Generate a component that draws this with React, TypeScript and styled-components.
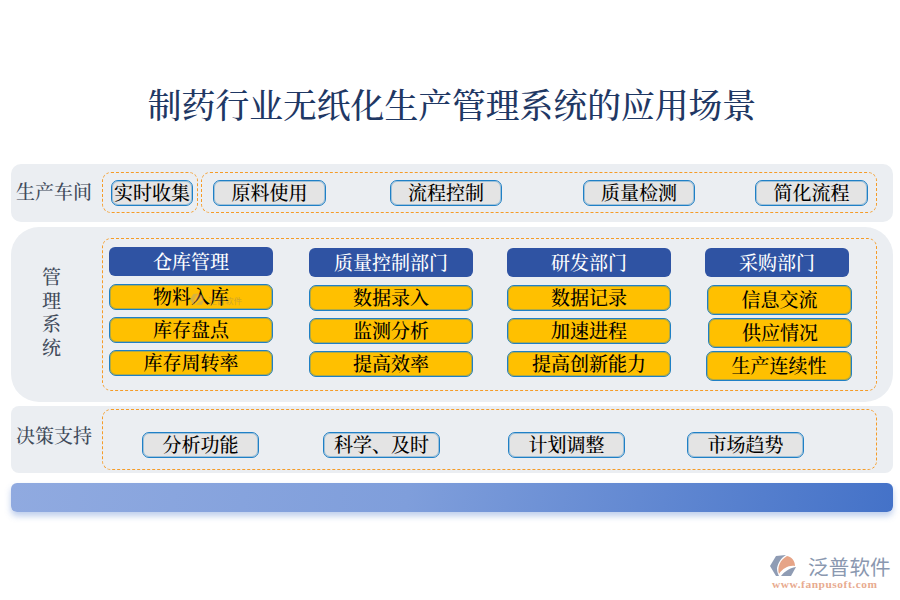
import React from 'react';
import styled, { createGlobalStyle } from 'styled-components';

const serif = `"Liberation Serif", "Noto Serif CJK SC", "Noto Sans CJK SC", serif`;

const GlobalStyle = createGlobalStyle`
    html, body {
        margin: 0;
        padding: 0;
        background: #fff;
        font-family: ${serif};
    }
`;

const Page = styled.div`
    position: relative;
    width: 900px;
    height: 600px;
    overflow: hidden;
    padding: 0 7px 0 11px;
    box-sizing: border-box;
`;

const Title = styled.h1`
    margin: 0;
    height: 164px;
    padding-top: 86px;
    box-sizing: border-box;
    text-align: center;
    font-size: 33.8px;
    line-height: 42px;
    font-weight: 500;
    color: #1f3864;
`;

const Panel = styled.section<{ $height: number; $radius: number; $gap: number }>`
    display: flex;
    height: ${p => p.$height}px;
    margin-bottom: ${p => p.$gap}px;
    border-radius: ${p => p.$radius}px;
    background: #ebeef2;
`;

const RowLabel = styled.div<{ $lift?: number }>`
    width: 91px;
    padding-left: 5px;
    padding-bottom: ${p => p.$lift ?? 0}px;
    box-sizing: border-box;
    align-self: center;
    font-size: 19px;
    line-height: 24px;
    font-weight: 500;
    color: #3f4a5a;
`;

const StackLabel = styled.div`
    width: 91px;
    padding-left: 31px;
    box-sizing: border-box;
    align-self: center;
    font-size: 19px;
    line-height: 23.5px;
    font-weight: 500;
    color: #3f4a5a;
    margin-top: -3px;
`;

const Dashed = styled.div`
    border: 1px dashed #f59c28;
    border-radius: 9px;
    box-sizing: border-box;
`;

const TopCollect = styled(Dashed)`
    width: 96px;
    height: 41px;
    margin: 8px 3px 0 0;
    padding: 7px 0 0 8px;
`;

const TopFlow = styled(Dashed)`
    width: 676px;
    height: 41px;
    margin-top: 8px;
    padding: 7px 0 0 11px;
    display: flex;
`;

const ManageBox = styled(Dashed)`
    width: 775px;
    height: 153px;
    margin-top: 11px;
    padding: 8px 0 0 6px;
    display: flex;
`;

const DecisionBox = styled(Dashed)`
    width: 775px;
    height: 61px;
    margin-top: 3px;
    padding: 22px 0 0 39px;
    display: flex;
`;

const GreyButton = styled.div<{ $width: number; $after?: number }>`
    width: ${p => p.$width}px;
    height: 26px;
    margin-right: ${p => p.$after ?? 0}px;
    padding-bottom: 3px;
    flex: none;
    display: flex;
    align-items: center;
    justify-content: center;
    box-sizing: border-box;
    border: 1px solid #1f80c6;
    box-shadow: inset 0 0 0 1px rgba(31, 128, 198, 0.35);
    border-radius: 7px;
    background: #e4e4e4;
    color: #000;
    font-size: 19px;
    font-weight: 500;
    white-space: nowrap;
`;

const Column = styled.div<{ $width: number; $after: number }>`
    position: relative;
    width: ${p => p.$width}px;
    margin-right: ${p => p.$after}px;
    flex: none;
    display: flex;
    flex-direction: column;
`;

const Header = styled.div<{ $top: number; $width?: number }>`
    width: ${p => (p.$width ? `${p.$width}px` : '100%')};
    height: 29px;
    margin-top: ${p => p.$top}px;
    margin-bottom: 8px;
    padding-bottom: 3px;
    box-sizing: border-box;
    display: flex;
    align-items: center;
    justify-content: center;
    border-radius: 6px;
    background: #2f53a3;
    color: #fff;
    font-size: 19px;
    font-weight: 500;
`;

const Item = styled.div<{ $height: number; $gap: number; $indent?: number }>`
    height: ${p => p.$height}px;
    margin-bottom: ${p => p.$gap}px;
    margin-left: ${p => p.$indent ?? 0}px;
    padding-bottom: 3px;
    display: flex;
    align-items: center;
    justify-content: center;
    box-sizing: border-box;
    border: 1px solid #1f80c6;
    box-shadow: inset 0 0 0 1px rgba(31, 128, 198, 0.35);
    border-radius: 7px;
    background: #ffc000;
    color: #000;
    font-size: 19px;
    font-weight: 500;
    white-space: nowrap;
`;

const Stamp = styled.div`
    position: absolute;
    left: 81px;
    top: 46px;
    display: flex;
    align-items: center;
    gap: 3px;
    opacity: 0.35;
    color: #777;
    font-size: 8.5px;
    line-height: 12px;
    font-family: "Noto Sans CJK SC", sans-serif;
`;

const GradientBar = styled.div`
    height: 29px;
    border-radius: 6px;
    background: linear-gradient(100deg, #90aae0 0%, #7f9edb 45%, #4472c8 100%);
    box-shadow: 0 4px 6px rgba(68, 114, 200, 0.35);
`;

const Brand = styled.div`
    position: absolute;
    left: 770px;
    top: 555px;
    display: grid;
    grid-template-columns: 38px auto;
    width: 122px;
`;

const BrandName = styled.div`
    font-family: "Noto Sans CJK SC", sans-serif;
    font-size: 20.5px;
    line-height: 23px;
    letter-spacing: 0.2px;
    color: #8a98b0;
    white-space: nowrap;
`;

const BrandUrl = styled.div`
    grid-column: 1 / 3;
    padding-left: 2px;
    font-family: "Liberation Serif", serif;
    font-weight: 700;
    font-size: 11.4px;
    line-height: 13px;
    letter-spacing: 0.55px;
    color: #e8ab90;
    white-space: nowrap;
`;

const BrandMark: React.FC<{ width?: number; height?: number }> = ({ width = 27, height = 22 }) => (
    <svg width={width} height={height} viewBox="0 0 27 22">
        <path d="M0 11 L6 1 L16 0 C11 3 8 8 7 13 C7 17 8 19 9 21 L6 21 Z" fill="#8f9cb4" />
        <path d="M17 1 C22 2 25 6 25 11 C19 10 13 13 9 19 C7 12 10 5 17 1 Z" fill="#e6a487" />
        <path d="M11 21 C14 17 19 13 26 12 L21 21 Z" fill="#8f9cb4" />
    </svg>
);

const departments = [
    {
        name: '仓库管理',
        after: 36,
        headerTop: 0,
        items: ['物料入库', '库存盘点', '库存周转率'],
    },
    {
        name: '质量控制部门',
        after: 34,
        headerTop: 1,
        items: ['数据录入', '监测分析', '提高效率'],
    },
    {
        name: '研发部门',
        after: 34,
        headerTop: 1,
        items: ['数据记录', '加速进程', '提高创新能力'],
    },
];

const App: React.FC = () => {
    return (
        <Page>
            <GlobalStyle />
            <Title>制药行业无纸化生产管理系统的应用场景</Title>

            <Panel $height={58} $radius={10} $gap={5}>
                <RowLabel>生产车间</RowLabel>
                <TopCollect>
                    <GreyButton $width={82}>实时收集</GreyButton>
                </TopCollect>
                <TopFlow>
                    <GreyButton $width={113} $after={64}>原料使用</GreyButton>
                    <GreyButton $width={112} $after={81}>流程控制</GreyButton>
                    <GreyButton $width={112} $after={60}>质量检测</GreyButton>
                    <GreyButton $width={113}>简化流程</GreyButton>
                </TopFlow>
            </Panel>

            <Panel $height={175} $radius={28} $gap={4}>
                <StackLabel>
                    管<br />理<br />系<br />统
                </StackLabel>
                <ManageBox>
                    {departments.map((dept, d) => (
                        <Column key={dept.name} $width={164} $after={dept.after}>
                            <Header $top={dept.headerTop}>{dept.name}</Header>
                            {dept.items.map(item => (
                                <Item key={item} $height={26} $gap={7}>
                                    {item}
                                </Item>
                            ))}
                            {d === 0 && (
                                <Stamp>
                                    <BrandMark width={15} height={13} />
                                    泛普软件
                                </Stamp>
                            )}
                        </Column>
                    ))}
                    <Column $width={147} $after={0}>
                        <Header $top={1} $width={144}>
                            采购部门
                        </Header>
                        <Item $height={30} $gap={3} $indent={2}>信息交流</Item>
                        <Item $height={30} $gap={3} $indent={3}>供应情况</Item>
                        <Item $height={30} $gap={0} $indent={1}>生产连续性</Item>
                    </Column>
                </ManageBox>
            </Panel>

            <Panel $height={67} $radius={8} $gap={10}>
                <RowLabel $lift={6}>决策支持</RowLabel>
                <DecisionBox>
                    <GreyButton $width={117} $after={64}>分析功能</GreyButton>
                    <GreyButton $width={117} $after={68}>科学、及时</GreyButton>
                    <GreyButton $width={117} $after={62}>计划调整</GreyButton>
                    <GreyButton $width={117}>市场趋势</GreyButton>
                </DecisionBox>
            </Panel>

            <GradientBar />

            <Brand>
                <BrandMark />
                <BrandName>泛普软件</BrandName>
                <BrandUrl>www.fanpusoft.com</BrandUrl>
            </Brand>
        </Page>
    );
};

export default App;
